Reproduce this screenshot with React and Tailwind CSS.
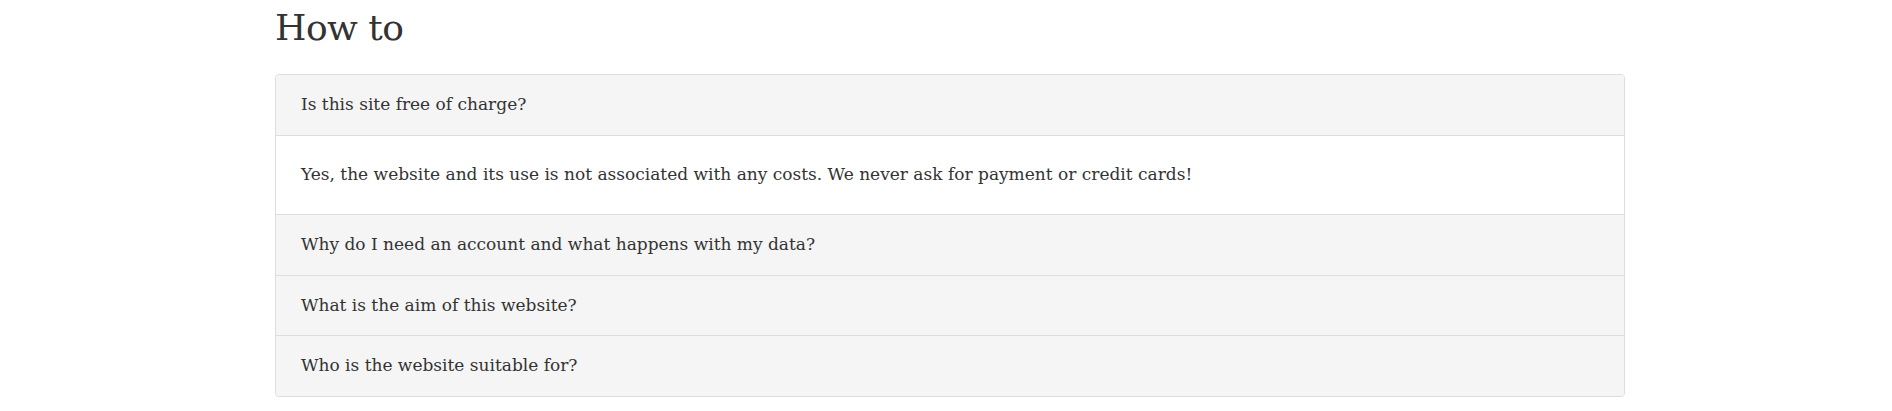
import React from "react";

const items = [
	{ q: "Is this site free of charge?", a: "Yes, the website and its use is not associated with any costs. We never ask for payment or credit cards!", h: "h-[60px]" },
	{ q: "Why do I need an account and what happens with my data?", h: "h-[60px]" },
	{ q: "What is the aim of this website?", h: "h-[59px]" },
	{ q: "Who is the website suitable for?", h: "h-[60px]" },
];

function App() {
	return (
		<div
			className="min-h-[411px] bg-white text-[#333] pl-[275px]"
			style={{ fontFamily: '"DejaVu Serif", Georgia, serif' }}
		>
			<div className="w-[1350px]">
				<h1 className="text-[36px] leading-[50px] pt-[3px] h-[74px] tracking-[-0.5px]">How to</h1>
				<div className="border border-[#ddd] rounded-[4px] overflow-hidden">
					{items.map((item, i) => (
						<div key={i} className={i > 0 ? "border-t border-[#ddd]" : ""}>
							<div className={"bg-[#f5f5f5] flex items-center px-[25px] text-[17px] " + item.h}>
								{item.q}
							</div>
							{item.a && (
								<div className="border-t border-[#ddd] bg-white h-[79px] flex items-center px-[25px] text-[17px]">
									{item.a}
								</div>
							)}
						</div>
					))}
				</div>
			</div>
		</div>
	);
}

export default App;
